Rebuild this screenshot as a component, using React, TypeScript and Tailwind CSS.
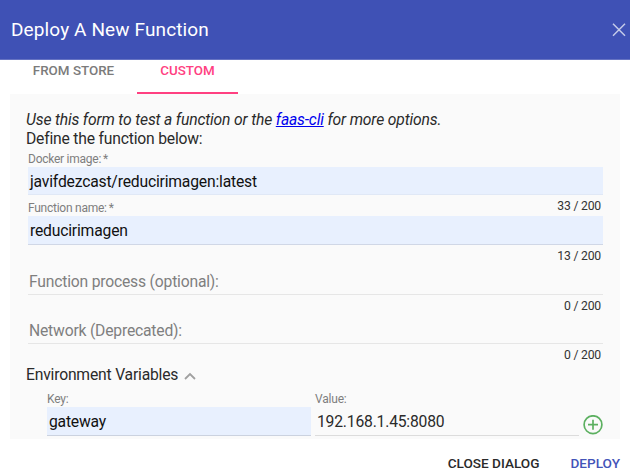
import type { ReactNode } from "react";

function Counter({ children }: { children: ReactNode }) {
  return (
    <div className="flex h-0 justify-end overflow-visible pr-0.5">
      <span className="pt-1 text-[12.2px] leading-[14px] tracking-[-0.2px] text-[#333]">{children}</span>
    </div>
  );
}

function FilledField({ label, value, count, last }: { label: string; value: string; count: string; last?: boolean }) {
  return (
    <div className={last ? "h-[50px]" : "h-[49px]"}>
      <div className="flex h-4 gap-[2px] text-[12px] leading-4 tracking-[-0.25px] text-[#7e7e7e]">
        <span>{label}</span>
        <span>*</span>
      </div>
      <div className={`flex items-center border-b bg-[#e8f0fe] pt-0.5 pl-0.5 text-[15.7px] leading-5 tracking-[-0.19px] text-[#111] ${last ? "h-[29px] border-[#d0d7e6]" : "h-7 border-[#e0e8f6]"}`}>
        {value}
      </div>
      <Counter>{count}</Counter>
    </div>
  );
}

function EmptyField({ label, count }: { label: string; count: string }) {
  return (
    <div className="h-[49px]">
      <div className="flex h-[45px] items-end border-b border-[#e6e6e6] pb-[2px] pl-px text-[15.7px] leading-5 tracking-[-0.2px] text-[#7f7f7f]">
        {label}
      </div>
      <Counter>{count}</Counter>
    </div>
  );
}

export default function App() {
  return (
    <div className="flex h-[476px] w-[630px] flex-col overflow-hidden bg-white font-['Roboto',sans-serif] text-[#2a2a2a]">
      <header className="flex h-[60px] shrink-0 items-center justify-between border-b border-[#6673c2] bg-[#3f51b5] pr-[4px] pl-[11px] text-white">
        <h1 className="text-[19px] leading-6 tracking-[0.12px]">Deploy A New Function</h1>
        <svg className="size-[14px] text-[#c5cbe9]" viewBox="0 0 14 14" fill="none" stroke="currentColor" strokeWidth="1.5">
          <path d="M1 .8 13 12.8M13 .8 1 12.8" />
        </svg>
      </header>
      <nav className="flex h-[34px] shrink-0 pl-[10px] text-[13.4px] leading-[22px] font-medium">
        <div className="w-[127px] text-center text-[#7b7b7b]">FROM STORE</div>
        <div className="w-[101px] border-b-2 border-[#ff4081] text-center text-[#ff4081]">CUSTOM</div>
      </nav>
      <main className="mx-[10px] h-[345px] shrink-0 bg-[#fafafa] pt-4 pr-[17px] pl-4">
        <div className="text-[15.7px] leading-[19px] tracking-[-0.2px]">
          <p className="tracking-[-0.17px] italic">
            Use this form to test a function or the <a className="text-[#0000ee] underline">faas-cli</a> for more options.
          </p>
          <p>Define the function below:</p>
        </div>
        <div className="pt-[3px] pl-[2px]">
          <FilledField label="Docker image:" value="javifdezcast/reducirimagen:latest" count="33 / 200" />
          <FilledField label="Function name:" value="reducirimagen" count="13 / 200" last />
          <EmptyField label="Function process (optional):" count="0 / 200" />
          <EmptyField label="Network (Deprecated):" count="0 / 200" />
        </div>
        <div className="flex h-[43px] items-start gap-[6px] pt-[17px] text-[15.7px] leading-5 tracking-[-0.2px]">
          <span>Environment Variables</span>
          <svg className="mt-[7px] h-[8px] w-3" viewBox="0 0 12 8" fill="none" stroke="#a0a0a0" strokeWidth="1.8">
            <path d="M1 7 6 2 11 7" />
          </svg>
        </div>
        <div className="flex gap-1 pl-[21px]">
          <div className="w-[264px]">
            <div className="h-4 text-[12px] leading-4 tracking-[-0.2px] text-[#7e7e7e]">Key:</div>
            <div className="flex h-[29px] items-center border-b border-[#cbd2df] bg-[#e8f0fe] pt-0.5 pl-0.5 text-[15.7px] tracking-[-0.2px] text-[#111]">gateway</div>
          </div>
          <div className="w-[264px]">
            <div className="h-4 text-[12px] leading-4 tracking-[-0.2px] text-[#7e7e7e]">Value:</div>
            <div className="flex h-[29px] items-center border-b border-[#dcdcdc] pt-0.5 pl-0.5 text-[15.7px] tracking-[-0.2px]">192.168.1.45:8080</div>
          </div>
          <svg className="mt-[24px] size-5 shrink-0" viewBox="0 0 20 20" fill="none" stroke="#5cb060" strokeWidth="1.7">
            <circle cx="10" cy="9.7" r="8.9" />
            <path d="M10 4.7v10M5 9.7h10" />
          </svg>
        </div>
      </main>
      <footer className="flex grow items-center justify-end gap-[31px] pt-[10px] pr-[10px] text-[13.6px] leading-4 font-medium">
        <button>CLOSE DIALOG</button>
        <button className="text-[#4354b8]">DEPLOY</button>
      </footer>
    </div>
  );
}
